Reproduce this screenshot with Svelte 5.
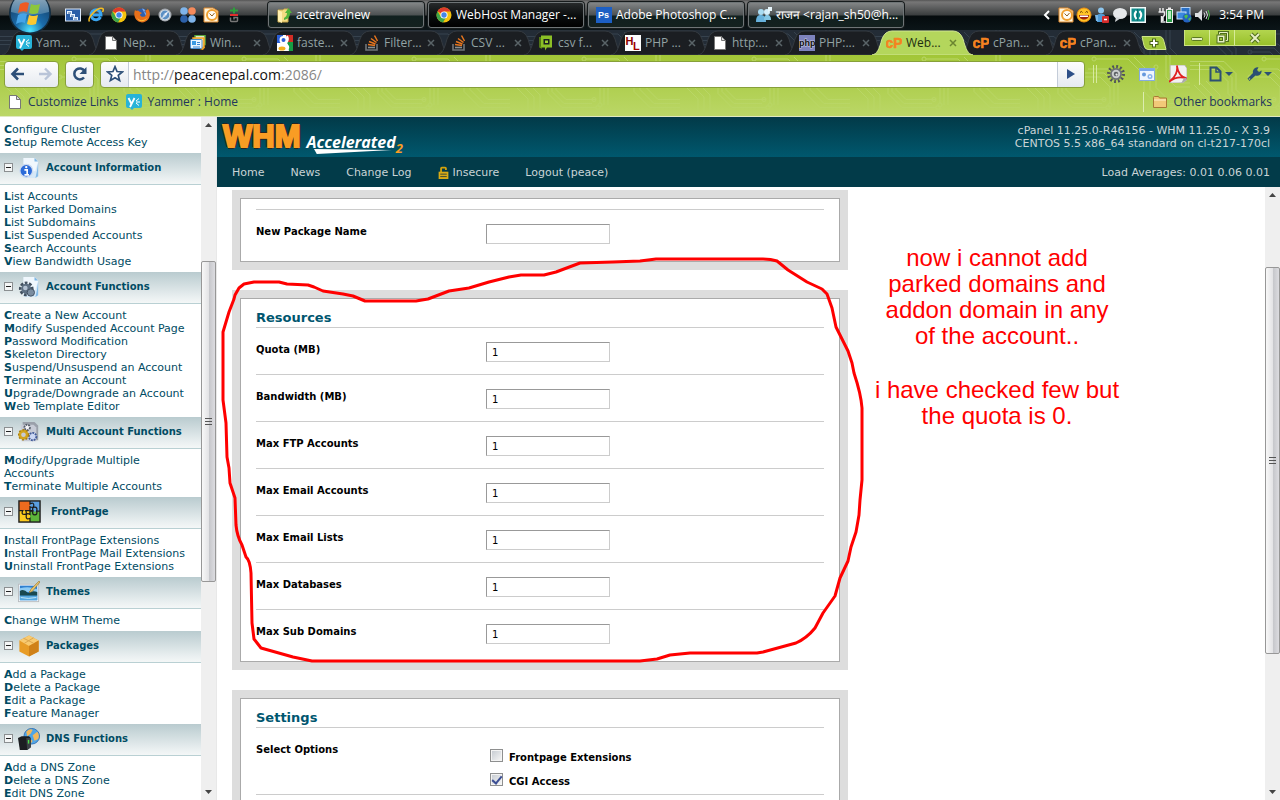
<script>
  const quick = ['desktop', 'ie', 'chrome', 'firefox', 'safari', 'dots', 'outlook', 'gplus'];
  const tasks = [
    { icon: 'folderup', text: 'acetravelnew' },
    { icon: 'chrome', text: 'WebHost Manager -...', active: true },
    { icon: 'ps', text: 'Adobe Photoshop C...' },
    { icon: 'people', text: 'राजन <rajan_sh50@h...' }
  ];
  const tray = ['outlook', 'smiley', 'person', 'bubble', 'camtasia'];
  const trayRight = ['plug', 'network', 'volume'];
  const tabs = [
    { icon: 'yammer', text: 'Yam...' },
    { icon: 'page', text: 'Nep...' },
    { icon: 'windows', text: 'Win...' },
    { icon: 'google', text: 'faste...' },
    { icon: 'stack', text: 'Filter...' },
    { icon: 'stack', text: 'CSV ...' },
    { icon: 'chat', text: 'csv f...' },
    { icon: 'hl', text: 'PHP ...' },
    { icon: 'page', text: 'http:...' },
    { icon: 'php', text: 'PHP:...' },
    { icon: 'cp', text: 'Web...', active: true },
    { icon: 'cp', text: 'cPan...' },
    { icon: 'cp', text: 'cPan...' }
  ];
  const topLinks = ['Configure Cluster', 'Setup Remote Access Key'];
  const groups = [
    { icon: 'accinfo', title: 'Account Information', links: ['List Accounts', 'List Parked Domains', 'List Subdomains', 'List Suspended Accounts', 'Search Accounts', 'View Bandwidth Usage'] },
    { icon: 'accfunc', title: 'Account Functions', links: ['Create a New Account', 'Modify Suspended Account Page', 'Password Modification', 'Skeleton Directory', 'Suspend/Unsuspend an Account', 'Terminate an Account', 'Upgrade/Downgrade an Account', 'Web Template Editor'] },
    { icon: 'multi', title: 'Multi Account Functions', links: ['Modify/Upgrade Multiple Accounts', 'Terminate Multiple Accounts'] },
    { icon: 'puzzle', title: 'FrontPage', wide: true, links: ['Install FrontPage Extensions', 'Install FrontPage Mail Extensions', 'Uninstall FrontPage Extensions'] },
    { icon: 'themes', title: 'Themes', links: ['Change WHM Theme'] },
    { icon: 'box', title: 'Packages', links: ['Add a Package', 'Delete a Package', 'Edit a Package', 'Feature Manager'] },
    { icon: 'dns', title: 'DNS Functions', links: ['Add a DNS Zone', 'Delete a DNS Zone', 'Edit DNS Zone'] }
  ];
  let resources = $state([
    { id: 'quota', label: 'Quota (MB)', value: '1' },
    { id: 'bandwidth', label: 'Bandwidth (MB)', value: '1' },
    { id: 'ftp', label: 'Max FTP Accounts', value: '1' },
    { id: 'email', label: 'Max Email Accounts', value: '1' },
    { id: 'lists', label: 'Max Email Lists', value: '1' },
    { id: 'databases', label: 'Max Databases', value: '1' },
    { id: 'subdomains', label: 'Max Sub Domains', value: '1' }
  ]);
  let packageName = $state('');
  let address = $state('http://peacenepal.com:2086/');
  let editingAddress = $state(false);
  let frontpage = $state(false);
  let cgi = $state(true);
</script>

{#snippet icon(name, size = 16)}
  <svg class="icon" width={size} height={size} viewBox={size > 20 ? '0 0 24 24' : '0 0 16 16'} aria-hidden="true">
    {#if name === 'desktop'}
      <rect x="0.500" y="2" width="15" height="12" fill="#2a5ea8" stroke="#dce8f8" />
      <path d="M2 4h5v3H2zM5 7h5v3H5zM8 10h5v3H8z" fill="#e8f2ff" /><path d="M3 5.500h3v1H3zM6 8.500h3v1H6zM9 11.500h3v1H9z" fill="#36609a" />
    {:else if name === 'ie'}
      <path d="M12.500 10A5 5 0 1 1 13 8H5" fill="none" stroke="#3aa5f0" stroke-width="3" />
      <path d="M1.500 14.500C-1 11 9 0 14.500 1.500 16 2 15 4 14.500 5" fill="none" stroke="#f5bd22" stroke-width="1.500" />
    {:else if name === 'chrome'}
      <circle cx="8" cy="8" r="7.500" fill="#f4c20d" /><path d="M8 8 1.500 4.200A7.500 7.500 0 0 1 14.600 4.500H8z" fill="#de3b2c" />
      <path d="M8 8 4.800 9.800 1.500 4.200A7.500 7.500 0 0 0 7 15.400L10.500 9.500z" fill="#3da54a" />
      <circle cx="8" cy="8" r="3.600" fill="#fff" /><circle cx="8" cy="8" r="2.700" fill="#4386e8" />
    {:else if name === 'firefox'}
      <circle cx="8" cy="8" r="6.500" fill="#2e5fb0" /><path d="M8 1.500C11 2 12 4 10 5c2 0 3 2 2 4" fill="#79a7e8" />
      <path d="M1 3c1 1 2 1 3 .5L6 5 8 6 6 7.500C6 10 11 11 12 8c.5-2 0-3-1-4.500 2 0 3-1 2.500-2C18 6 16 15 8 15.500 1 15-1 8 1 3z" fill="#e8701a" />
      <path d="M3 10c1 3 5 5 10 1-3 5-9 4-10-1z" fill="#ffc33c" />
    {:else if name === 'safari'}
      <circle cx="8" cy="8" r="6.500" fill="#a4a9af" /><circle cx="8" cy="8" r="5.200" fill="#dfe6ec" /><circle cx="8" cy="8" r="4.400" fill="#5b8fc4" />
      <path d="M11.500 4 7 7l2 2z" fill="#f0f4fa" /><path d="M4.500 12 7 7l2 2z" fill="#d0ddeb" />
    {:else if name === 'dots'}
      <circle cx="4" cy="4" r="3.800" fill="#7fb4ea" /><circle cx="12" cy="4" r="3.800" fill="#f58a5b" /><circle cx="4" cy="12" r="3.800" fill="#2c60a8" /><circle cx="12" cy="12" r="3.800" fill="#7fb4ea" />
    {:else if name === 'outlook'}
      <path d="M1 1h9l5 3v11H1z" fill="#fff3d8" stroke="#e08a2c" /><circle cx="9" cy="8" r="5" fill="#fffdf5" stroke="#f0a030" stroke-width="2" /><path d="M6.500 6.500 9 9l2.500-3" fill="none" stroke="#906020" />
    {:else if name === 'gplus'}
      <path d="M4 3.500h8M8 0.500v6" stroke="#2f9e3c" stroke-width="2" /><path d="M4 8h8" stroke="#e02d2d" stroke-width="2" />
      <path d="M4.500 10.500v3a1 1 0 0 0 1 1h5a1 1 0 0 0 1-1v-3H8v2" fill="none" stroke="#777" stroke-width="1.500" />
    {:else if name === 'folderup'}
      <path d="M2 3h5l1-1h4v13H2z" fill="#f3dc83" stroke="#c9a84a" /><path d="M2 3 6 5v11l-4-2z" fill="#fff0ae" />
      <path d="M8 11c2-1 3-3 3-5H9l3.500-5L16 6h-2c0 4-2 6-6 7z" fill="#52b43a" />
    {:else if name === 'ps'}
      <rect width="16" height="16" fill="#1c5fc4" /><text x="2" y="11" font-size="9" font-weight="700" font-family="Liberation Sans" fill="#fff">Ps</text>
    {:else if name === 'people'}
      <circle cx="5" cy="5" r="3" fill="#a9dcf2" /><path d="M0 15C0 9 2 8 5 8s5 2 5 7z" fill="#67b2dc" /><circle cx="11" cy="5" r="3" fill="#d4effb" /><path d="M8 13c0-4 1-5 3-5 3 0 4 2 4 5z" fill="#83c6e4" /><path d="M12 0h4v4h-3l-1 2z" fill="#e8f6fc" />
    {:else if name === 'smiley'}
      <circle cx="8" cy="8" r="7" fill="#ffc426" stroke="#f09010" /><path d="M3 8h10c0 6-10 6-10 0z" fill="#a0240e" /><path d="M4 8.500h8v1.500H4z" fill="#fff" /><path d="M4 5.500q1.500-2 2.500 0M9.500 5.500q1-2 2.500 0" fill="none" stroke="#5a3000" />
    {:else if name === 'person'}
      <circle cx="7" cy="3.500" r="3" fill="#8ec6ee" /><path d="M3 15V9c0-3 8-3 8 0v6z" fill="#4f9bd8" /><path d="M1 8h3v6H2z" fill="#77b6e8" /><rect x="8" y="9" width="7" height="7" rx="1" fill="#d32b2b" /><path d="M10 12.500h3" stroke="#fff" stroke-width="1.500" />
    {:else if name === 'bubble'}
      <ellipse cx="8" cy="6.500" rx="7" ry="5.500" fill="#e6e8ea" /><path d="M4 10 3 15l6-4z" fill="#d3d6d9" />
    {:else if name === 'camtasia'}
      <rect width="16" height="16" fill="#f4f8f8" /><rect x="1.500" y="1.500" width="13" height="13" fill="#108c8c" /><path d="M6.500 4Q3 8 6.500 12M9.500 4q3.500 4 0 8" fill="none" stroke="#fff" stroke-width="2" /><path d="M7.500 2v12" stroke="#0c6e70" />
    {:else if name === 'plug'}
      <path d="M2 1v4M5 1v4M0.500 5h6v3L5 10v4M3.500 9v6h4" fill="none" stroke="#e8e8e8" stroke-width="1.500" /><rect x="8.500" y="2.500" width="6" height="13" fill="#2a9c46" stroke="#eee" /><rect x="10" y="0.500" width="3" height="2" fill="#eee" /><rect x="10" y="4" width="3" height="8" fill="#b8eec0" />
    {:else if name === 'network'}
      <rect x="5" y="0.500" width="9" height="8" fill="#2870c8" stroke="#b8d4f4" /><rect x="1" y="5" width="9" height="7" fill="#3c8ae0" stroke="#cfe2f8" /><circle cx="11" cy="11" r="4.500" fill="#2462c0" /><path d="M8 9q3-3 4 0-1 2-2 3M12 12l3-2-1 4z" fill="#4cc04c" />
    {:else if name === 'volume'}
      <path d="M1 6h3l4-4v12l-4-4H1z" fill="#dcdfe1" /><path d="M10 5.500q2 2.500 0 5M12 4q3 4 0 8" fill="none" stroke="#dcdfe1" /><path d="M14 3q3 5 0 10" fill="none" stroke="#4fc24f" />
    {:else if name === 'yammer'}
      <path d="M2 0h12q2 0 2 2v10q0 2-2 2H8l-2 2-2-2H2q-2 0-2-2V2q0-2 2-2z" fill="#27b3d8" /><path d="M2.500 4 5.500 10 8.500 4M5.500 10 4 13" fill="none" stroke="#fff" stroke-width="1.800" /><path d="m10 7 3-2.500M10 8h4M10 9l3 2.500" stroke="#fff" />
    {:else if name === 'page'}
      <path d="M2.500 1.500h7l4 4v9h-11z" fill="#fff" stroke="#777" /><path d="M9.500 1.500v4h4z" fill="#ddd" stroke="#777" />
    {:else if name === 'windows'}
      <rect x="5" y="0.500" width="10" height="9" fill="#fff" stroke="#5aa83a" stroke-width="1.500" /><rect x="3" y="3" width="11" height="9.500" fill="#f8dc9a" stroke="#f0a020" stroke-width="1.500" /><path d="m2 12 11 3 2-3z" fill="#f0a020" /><rect x="0.500" y="4.500" width="11.500" height="9" rx="1" fill="#e9f5ff" stroke="#4b8fd0" /><rect x="2" y="6" width="4" height="4" fill="#3b9ae2" /><path d="M7 7.500h3M7 9.500h3M3 12h7" stroke="#3b86d2" fill="none" />
    {:else if name === 'google'}
      <rect width="16" height="16" fill="#fff" /><path d="M0 0h6v8H0z" fill="#2b5fd6" /><path d="M9 0h7v7h-6z" fill="#d22d25" /><path d="M10 7h6v9h-4z" fill="#179c43" /><ellipse cx="5" cy="13.500" rx="3.500" ry="2" fill="#f2b01e" /><circle cx="6.500" cy="5" r="3" fill="#2b5fd6" stroke="#fff" stroke-width="2" /><path d="M10 1q2 4-1 7-1 1 1 2 3 3-1 5" fill="none" stroke="#fff" stroke-width="2" />
    {:else if name === 'stack'}
      <path d="M2 9v6h11V9" fill="none" stroke="#70757a" stroke-width="1.600" /><path d="M4 12.500h7" stroke="#8b8f92" stroke-width="1.600" /><path d="m4 9.500 7 1M5 6.500l6.500 2.500M7 3.500l5.500 4M10.500 0.500l3 5.500" stroke="#e8761e" stroke-width="1.500" />
    {:else if name === 'chat'}
      <path d="M3 0.500h11v12H9l-2 3v-3H3z" fill="#8cbf26" /><rect x="5.500" y="4" width="6" height="5.500" fill="#1b1e22" /><rect x="7" y="5.500" width="3" height="2.500" fill="#9ed12f" /><path d="M2 2v10l2 1" fill="none" stroke="#659610" stroke-width="1.500" />
    {:else if name === 'hl'}
      <rect width="16" height="16" fill="#fff" /><text x="0.500" y="10" font-size="11" font-weight="700" font-family="Liberation Sans" fill="#8b0000">H</text><text x="8" y="15" font-size="11" font-weight="700" font-family="Liberation Sans" fill="#a40000">L</text>
    {:else if name === 'php'}
      <rect width="16" height="16" fill="#7e83bd" /><text x="0" y="11" font-size="9" font-weight="700" font-family="Liberation Sans" fill="#111" stroke="#c9cce6" stroke-width="1" paint-order="stroke">php</text>
    {:else if name === 'cp'}
      <text x="-0.500" y="13" font-size="14" font-weight="700" font-family="Liberation Sans" fill="#f58220" stroke="#f58220" stroke-width="0.500">cP</text>
    {:else if name === 'gear'}
      <circle cx="8" cy="8" r="6.500" fill="none" stroke="#505458" stroke-width="3" stroke-dasharray="1.600 1.800" /><circle cx="8" cy="8" r="4.500" fill="#c9cccd" stroke="#6c7074" stroke-width="1.500" /><circle cx="8" cy="8" r="2" fill="#5c6064" /><circle cx="8.500" cy="8.500" r="1" fill="#e8eaea" />
    {:else if name === 'panel'}
      <rect x="0.500" y="2.500" width="15" height="12" fill="#eef5fd" stroke="#86ace0" /><rect x="1" y="3" width="14" height="2" fill="#7ba7ea" /><circle cx="5" cy="8.500" r="2" fill="#6699dd" /><circle cx="11" cy="10.500" r="2.500" fill="#88b2ea" /><circle cx="11" cy="10.500" r="1" fill="#fff" />
    {:else if name === 'pdf'}
      <path d="M1 0h13l2 3v10q-4 4-8 3H1z" fill="#f1f1f1" stroke="#b0b0a8" stroke-width="0.800" /><path d="M0 15C6 11 8 5 7 0.500 8 8 11 11 16 12 10 10 5 11 0 15" fill="none" stroke="#e02020" stroke-width="1.600" /><path d="M11 16q4-1 5-5l-3 1z" fill="#aaa" />
    {:else if name === 'pagemenu'}
      <path d="M2.500 1.500h6l4 4v9h-10z" fill="none" stroke="#2c5073" stroke-width="2" /><path d="M8 2v4h4" fill="none" stroke="#2c5073" stroke-width="1.500" />
    {:else if name === 'wrench'}
      <path d="M14.500 4.500 12 6 10 4l1.500-2.500A4.500 4.500 0 0 0 6 7L0.500 12.500l2 2.500L8.500 9.500a4.500 4.500 0 0 0 6-5z" fill="#2c5073" /><circle cx="2.500" cy="13" r="0.800" fill="#b7d860" />
    {:else if name === 'folder'}
      <path d="M1.500 13.500v-10q0-1 1-1h4l1 1.500h7v9.500z" fill="#f2c878" stroke="#a87834" /><path d="M2 6h12" stroke="#fff0cc" />
    {:else if name === 'back'}
      <path d="M14 8H3M8 2.500 2.500 8 8 13.500" fill="none" stroke="#2d4f78" stroke-width="2.600" />
    {:else if name === 'forward'}
      <path d="M2 8h11M8 2.500 13.500 8 8 13.500" fill="none" stroke="#b9c4d8" stroke-width="2.400" />
    {:else if name === 'reload'}
      <path d="M12 11.500A5.500 5.500 0 1 1 12.500 5" fill="none" stroke="#2d4f78" stroke-width="2.500" /><path d="M14.500 1v7h-7z" fill="#2d4f78" />
    {:else if name === 'star'}
      <path d="m8 1.500 1.800 4.300 4.700.4-3.600 3 1.200 4.600L8 11.300l-4.100 2.500 1.200-4.600-3.600-3 4.700-.4z" fill="#fff" stroke="#2d4f78" stroke-width="1.500" />
    {:else if name === 'go'}
      <path d="M4 3v10l8-5z" fill="#2d4f88" />
    {:else if name === 'lock'}
      <path d="M5 8V3q0-1 1-1h4q1 0 1 1v2" fill="none" stroke="#d3a30c" stroke-width="2.200" /><path d="M2 7h12v9H2z" fill="#d9ab16" /><path d="M4 10h8M4 13h8" stroke="#3b4a34" stroke-width="1.200" />
    {:else if name === 'accinfo' || name === 'accfunc'}
      <path d="M6 1h12l4 4v16l-3 2H6z" fill="#d5e8f8" /><path d="M6 1h12l4 4-3 10L6 19z" fill="#f0f7fd" /><path d="M18 1v4h4z" fill="#7db6e6" /><path d="M22 6v15l-3 2q2-8 3-17" fill="#86bce8" />
      {#if name === 'accinfo'}
        <circle cx="9" cy="15" r="7" fill="#2c6bd8" stroke="#cfdcf0" stroke-width="1.500" /><circle cx="9" cy="11" r="1.300" fill="#fff" /><path d="M7 14h3v5M7 19.500h5" fill="none" stroke="#fff" stroke-width="1.800" />
      {:else}
        <circle cx="9" cy="14" r="6.500" fill="none" stroke="#42505f" stroke-width="3" stroke-dasharray="3 1.700" /><circle cx="9" cy="14" r="5.500" fill="#5e7083" /><circle cx="8" cy="13" r="2.500" fill="#b4c2d2" /><circle cx="14" cy="18" r="4" fill="#7b8da0" stroke="#3f4e5e" />
      {/if}
    {:else if name === 'multi'}
      <path d="M5 1h13l4 4v16H6z" fill="#9aa0aa" /><path d="M3 4h14l3 3v15H4z" fill="#c7cbd6" /><circle cx="10" cy="7" r="3" fill="#f4f4f8" stroke="#555c68" stroke-width="2" stroke-dasharray="2 1" /><circle cx="16" cy="17" r="4" fill="#ccd8f4" stroke="#405a98" stroke-width="2" stroke-dasharray="2 1" /><circle cx="6" cy="15" r="4" fill="none" stroke="#d2a41e" stroke-width="3" /><circle cx="6" cy="15" r="5.500" fill="none" stroke="#a87c10" stroke-width="1.500" stroke-dasharray="2 2" />
    {:else if name === 'puzzle'}
      <rect x="1" y="1" width="22" height="22" fill="#5db53a" /><path d="M1 1h11.500v10H1z" fill="#ee6a1e" /><path d="M12.500 1H23v11H12.500z" fill="#5a9ee0" /><path d="M1 11h11.500v12H1z" fill="#fccb1e" />
      <path d="M12.500 1v3q4-2 4 1.500t-4 1.500v4h3q-1-3.500 2-3.500t2 4H23" fill="none" stroke="#1c1c1c" stroke-width="1.300" />
      <path d="M1 11h4q-2 4 1.500 4T8 11h4.500v4q-4-2-4 2t4 2v4M12.500 11.500h3q-1 4 2 4t2-4" fill="none" stroke="#1c1c1c" stroke-width="1.300" />
      <rect x="1" y="1" width="22" height="22" fill="none" stroke="#222" stroke-width="1.500" />
    {:else if name === 'themes'}
      <rect x="0.500" y="3.500" width="22" height="19" fill="#fff" stroke="#b9bcc0" /><rect x="2" y="5" width="19" height="16" fill="#2f80d0" /><path d="M2 8q10-3 19 1v3H2z" fill="#8ccaf4" /><path d="M2 11q4-3 9 2 5-3 10-1v4H2z" fill="#184850" /><path d="M2 16h19v5H2z" fill="#55a8e0" /><path d="M3 18q8 2 17 0" stroke="#c9eafa" fill="none" /><path d="M14 9 23 0l1 1-8 10q-3 2-4 1 2-1 2-3z" fill="#e8c46a" stroke="#9a7630" stroke-width="0.700" />
    {:else if name === 'box'}
      <path d="M12 0.500 22.500 6v12L12 23.500 1.500 18V6z" fill="#e89c26" /><path d="M12 0.500 22.500 6 12 12 1.500 6z" fill="#f8ca70" /><path d="M12 12 22.500 6v12L12 23.500z" fill="#cf8118" /><path d="m6 3.500 11 5.500M17 3 7 9" stroke="#d9a24a" />
    {:else if name === 'dns'}
      <circle cx="15" cy="9" r="8.500" fill="#4fa5e6" stroke="#2f70b4" /><path d="M9 4q4-4 7-2l-2 4-4 3zM16 8l5-4q3 4 1 8l-4 2zM12 12l4 2-2 3z" fill="#f2b85c" /><path d="M0 11 4 9h8l2 2v10l-4 3H2z" fill="#1b1e21" /><path d="M9 11h5v10l-4 3z" fill="#3b4146" /><path d="M11.500 13v4" stroke="#49e044" stroke-width="1.500" />
    {/if}
  </svg>
{/snippet}

{#snippet link(text)}
  <a href="#top"><b>{text[0]}</b>{text.slice(1)}</a>
{/snippet}

{#snippet scrollbar(before, thumb, after)}
  <div class="scrollbar" aria-hidden="true">
    <svg width="15" height="16" viewBox="0 0 15 16"><path d="M4 10h7L7.500 6z" fill="#444" /></svg>
    <div style="flex: {before} 0 0"></div>
    <div class="thumb" style="flex: {thumb} 0 0"><i></i><i></i><i></i></div>
    <div style="flex: {after} 0 0"></div>
    <svg width="15" height="16" viewBox="0 0 15 16"><path d="M4 6h7l-3.500 4z" fill="#444" /></svg>
  </div>
{/snippet}

{#snippet circuit(id, color)}
  <svg class="circuit" aria-hidden="true">
    <defs>
      <pattern {id} width="170" height="62" patternUnits="userSpaceOnUse">
        <g fill="none" stroke={color} stroke-width="1">
          <path d="M0 6.500h34l12 12v16l10 10h30M0 10.500h30l12 12v14l12 12h28M0 14.500h26l12 12v12l14 14h34M4 30l14 14v18M10 28l14 14v20M16 26l14 14v22" />
          <path d="M170 52.500h-30l-16-16V20L108 4H76M170 48.500h-26l-14-14V18L114 2M170 44.500h-22l-12-12V14M60 22h20l10 10v16M64 18h20l10 10v22M68 14h20l10 10v26M150 0v18l10 10h10M146 0v22l10 10h14" />
          <circle cx="84" cy="44.500" r="2" /><circle cx="88" cy="52.500" r="2" /><circle cx="90" cy="50" r="2" /><circle cx="60" cy="22" r="2" /><circle cx="74" cy="4" r="2" /><circle cx="136" cy="12" r="2" />
        </g>
      </pattern>
    </defs>
    <rect width="100%" height="100%" fill="url(#{id})" />
  </svg>
{/snippet}

<div class="desktop" id="top">
  <header class="taskbar">
    <button class="orb" aria-label="Start">
      <svg width="44" height="36" viewBox="0 0 44 36" aria-hidden="true">
        <defs>
          <radialGradient id="orb" cx=".5" cy=".95" r=".9"><stop offset="0" stop-color="#4ee4ff" /><stop offset=".4" stop-color="#1b6cab" /><stop offset="1" stop-color="#16395c" /></radialGradient>
          <linearGradient id="shine" x2="0" y2="1"><stop offset="0" stop-color="#d8e6ee" /><stop offset="1" stop-color="#5b8cae" /></linearGradient>
        </defs>
        <circle cx="22" cy="13" r="21" fill="#122c40" /><circle cx="22" cy="13" r="19.500" fill="url(#orb)" />
        <path d="M3 12C3-3 15-7 22-7s19 4 19 19q-19 6-38 0" fill="url(#shine)" opacity=".7" />
        <path d="M12 4q5-3 9-1l-2 9q-5-2-9 1z" fill="#ee5a24" /><path d="M23 4q4 2 9 0l-2 9q-5 2-9 0z" fill="#8cc63c" />
        <path d="M10 15q4-3 9-1l-2 9q-4-2-9 1z" fill="#45a4e8" /><path d="M21 15q4 2 9 0l-2 9q-5 2-9 0z" fill="#fdc82f" />
      </svg>
    </button>
    <nav class="quick" aria-label="Quick launch">
      {#each quick as q}<button aria-label={q}>{@render icon(q)}</button>{/each}
    </nav>
    <div class="tasks">
      {#each tasks as t}
        <button class="task" class:active={t.active}>{@render icon(t.icon)}<span>{t.text}</span></button>
      {/each}
    </div>
    <div class="tray">
      <svg width="8" height="10" viewBox="0 0 8 10" aria-hidden="true"><path d="M6 1 2 5l4 4" fill="none" stroke="#fff" stroke-width="2" /></svg>
      {#each tray as t}{@render icon(t)}{/each}
      <span class="trayright">{#each trayRight as t}{@render icon(t)}{/each}</span>
      <time>3:54 PM</time>
    </div>
  </header>

  <div class="tabstrip">
    {@render circuit('circuit-dark', '#36424e')}
    <div class="tabs">
      {#each tabs as t}
        <div class="tab" class:active={t.active}>
          <svg class="shape" viewBox="0 0 101 25" preserveAspectRatio="none" aria-hidden="true">
            <path d="M0 25C5 24 7 20 10 9Q13 1 20 1H81Q88 1 91 9C94 20 96 24 101 25z" />
          </svg>
          {@render icon(t.icon)}
          <span>{t.text}</span>
          <button class="close" aria-label="Close tab"><svg width="8" height="8" viewBox="0 0 8 8"><path d="m1 1 6 6M7 1 1 7" /></svg></button>
        </div>
      {/each}
      <button class="newtab" aria-label="New tab">
        <svg width="26" height="14" viewBox="0 0 26 14"><path d="M1 0.500h17q4 0 5 5l2 8H7q-3 0-4-4z" fill="#a2c83e" stroke="#cfe68a" /><path d="M13 2.500v9M8.500 7h9" stroke="#4b6618" stroke-width="4" /><path d="M13 3.500v7M9.500 7h7" stroke="#fff" stroke-width="2" /></svg>
      </button>
    </div>
    <div class="wincontrols">
      <button aria-label="Minimize"><svg width="14" height="12" viewBox="0 0 14 12"><rect x="1.500" y="5.500" width="11" height="3" rx="1" fill="#e6efc4" stroke="#5b7a20" /></svg></button>
      <button aria-label="Restore"><svg width="14" height="14" viewBox="0 0 14 14"><path d="M4.500 3.500v-2h8v8h-2" fill="none" stroke="#50701c" stroke-width="3" /><path d="M4.500 3.500v-2h8v8h-2" fill="none" stroke="#e6efc4" /><rect x="2" y="4" width="8" height="8" fill="#e6efc4" stroke="#50701c" /><rect x="4.500" y="6.500" width="3" height="3" fill="#a2c83e" stroke="#50701c" /></svg></button>
      <button class="wide" aria-label="Close"><svg width="14" height="12" viewBox="0 0 14 12"><path d="m3 2 8 8m0-8-8 8" stroke="#50701c" stroke-width="4" /><path d="m3 2 8 8m0-8-8 8" stroke="#e6efc4" stroke-width="2" /></svg></button>
    </div>
  </div>

  <div class="toolbar">
    {@render circuit('circuit-green', '#b9d666')}
    <div class="addressrow">
      <div class="pair">
        <button aria-label="Back">{@render icon('back')}</button>
        <button aria-label="Forward">{@render icon('forward')}</button>
      </div>
      <button class="pill" aria-label="Reload">{@render icon('reload')}</button>
      <div class="omnibox">
        <button aria-label="Bookmark">{@render icon('star', 18)}</button>
        <div class="url">
          {#if !editingAddress}<span aria-hidden="true"><i>http://</i>peacenepal.com<i>:2086/</i></span>{/if}
          <input class:editing={editingAddress} aria-label="Address" bind:value={address} onfocus={() => (editingAddress = true)} onblur={() => (editingAddress = false)} />
        </div>
        <button class="go" aria-label="Go">{@render icon('go')}</button>
      </div>
      <div class="extensions">
        <i class="grip"></i>
        <button aria-label="Settings">{@render icon('gear', 18)}</button>
        <button aria-label="Panel">{@render icon('panel')}</button>
        <button aria-label="PDF">{@render icon('pdf', 18)}</button>
        <i class="rule"></i>
        <button class="menu" aria-label="Page menu">{@render icon('pagemenu')}<i class="caret"></i></button>
        <button class="menu" aria-label="Tools menu">{@render icon('wrench')}<i class="caret"></i></button>
      </div>
    </div>
    <nav class="bookmarks" aria-label="Bookmarks">
      <a href="#top">{@render icon('page')}Customize Links</a>
      <a href="#top">{@render icon('yammer')}Yammer : Home</a>
      <a class="other" href="#top">{@render icon('folder')}Other bookmarks</a>
    </nav>
  </div>

  <div class="frames">
    <aside class="side">
      <nav class="menu-list" aria-label="WHM functions">
        <ul class="first">
          {#each topLinks as l}<li>{@render link(l)}</li>{/each}
        </ul>
        {#each groups as g}
          <h2 class:wide={g.wide}>
            <button class="toggle" aria-label="Collapse {g.title}"></button>
            {@render icon(g.icon, g.wide ? 23 : 22)}
            <span>{g.title}</span>
          </h2>
          <ul>
            {#each g.links as l}<li>{@render link(l)}</li>{/each}
          </ul>
        {/each}
      </nav>
      {@render scrollbar(128, 320, 203)}
    </aside>

    <main class="content">
      <div class="banner">
        <div class="logo"><span class="whm">WHM</span><span class="acc">Accelerated<svg viewBox="0 0 84 5" preserveAspectRatio="none" aria-hidden="true"><path d="M0 0 84 1 3 5z" fill="#fff" /></svg></span><sub>2</sub></div>
        <p>cPanel 11.25.0-R46156 - WHM 11.25.0 - X 3.9<br />CENTOS 5.5 x86_64 standard on cl-t217-170cl</p>
      </div>
      <nav class="mainnav" aria-label="Main">
        <a href="#top">Home</a>
        <a href="#top">News</a>
        <a href="#top">Change Log</a>
        <a href="#top" class="insecure">{@render icon('lock', 13)}Insecure</a>
        <a href="#top">Logout (peace)</a>
        <span>Load Averages: 0.01 0.06 0.01</span>
      </nav>
      <div class="pane">
        <form class="form" onsubmit={(e) => e.preventDefault()}>
          <section class="card">
            <div class="inner">
              <div class="rows top">
                <div class="row"><label for="package">New Package Name</label><input id="package" type="text" bind:value={packageName} /></div>
              </div>
            </div>
          </section>
          <section class="card">
            <div class="inner">
              <h3>Resources</h3>
              <div class="rows">
                {#each resources as r}
                  <div class="row"><label for={r.id}>{r.label}</label><input id={r.id} type="text" bind:value={r.value} /></div>
                {/each}
              </div>
            </div>
          </section>
          <section class="card">
            <div class="inner">
              <h3>Settings</h3>
              <div class="rows">
                <div class="row options">
                  <span class="label">Select Options</span>
                  <div class="checks">
                    <label><input type="checkbox" bind:checked={frontpage} /><span>Frontpage Extensions</span></label>
                    <label><input type="checkbox" bind:checked={cgi} /><span>CGI Access</span></label>
                  </div>
                </div>
                <div class="row"></div>
              </div>
            </div>
          </section>
        </form>
        {@render scrollbar(64, 386, 130)}
        <svg class="scribble" width="660" height="490" viewBox="217 187 660 490" aria-hidden="true">
          <path d="M234 299 235 295 239 288 244 284 254 282H279L287 284 308 285 314 287 323 291 343 294 353 296 365 301H416L428 299 449 291 469 288 489 282 509 277 521 275H544L556 272 580 263 613 262 640 261 656 259H763Q771 259 777 261L788 270 807 282 822 289 827 294 832 308 836 327 848 351 852 363 854 373Q861 394 862 408V480L860 500 859 515 856 532 851 547 848 561 840 578 835 596 823 613 815 628Q807 638 796 643L763 652 757 653H690L670 655 657 659 640 661H312L293 657 261 648 254 639 252 623 251 573Q250 560 246 557L242 545Q237 536 236 525L235 498 230 483 229 468 227 457 226 423 223 400V332L229 312Z" />
        </svg>
        <div class="note">
          <p>now i cannot add<br />parked domains and<br />addon domain in any<br />of the account..</p>
          <p>i have checked few but<br />the quota is 0.</p>
        </div>
      </div>
    </main>
  </div>
</div>

<style>
  :global(body) { margin: 0; }
  * { box-sizing: border-box; }
  .desktop { display: flex; flex-direction: column; height: 100vh; overflow: hidden; font: 11px/13px "DejaVu Sans", Verdana, sans-serif; background: #fff; }
  button { border: 0; padding: 0; margin: 0; background: none; font: inherit; color: inherit; display: flex; align-items: center; justify-content: center; }
  a { color: inherit; text-decoration: none; }
  ul, p, h2, h3 { margin: 0; padding: 0; list-style: none; }
  .icon { flex: none; display: block; }

  .taskbar { display: flex; align-items: center; height: 30px; flex: none; padding-left: 8px; background: linear-gradient(#555 0, #777 2px, #3a3d3e 15px, #050b0d 16px, #0b1518); color: #fff; font: 12px/16px "Open Sans", sans-serif; position: relative; z-index: 3; }
  .orb { align-self: flex-start; width: 44px; height: 30px; align-items: flex-start; }
  .orb svg { flex: none; overflow: hidden; }
  .quick { display: flex; gap: 7px; margin-left: 13px; width: 203px; }
  .tasks { display: flex; gap: 4px; flex: 0 1 636px; min-width: 0; }
  .task { flex: 1 1 0; min-width: 0; height: 26px; justify-content: flex-start; gap: 4px; padding-left: 7px; border: 1px solid #6f7577; border-radius: 3px; background: linear-gradient(#828586, #4c5152 12px, #11201f 13px, #14211f); white-space: nowrap; overflow: hidden; box-shadow: 0 0 0 1px #161b1c; }
  .task.active { background: linear-gradient(#272a2b, #0b0e0f 12px, #000); }
  .tray { margin-left: auto; display: flex; align-items: center; gap: 2px; padding-right: 16px; white-space: nowrap; }
  .tray > svg:first-child { margin-right: 5px; }
  .trayright { display: flex; gap: 2px; margin: 0 7px 0 10px; }

  .tabstrip { display: flex; height: 25px; flex: none; background: #232c36; position: relative; z-index: 2; }
  .circuit { position: absolute; inset: 0; width: 100%; height: 100%; }
  .tabs { display: flex; flex: 1 1 auto; min-width: 0; padding-left: 2px; position: relative; }
  .tab { flex: 0 1 87px; min-width: 0; display: flex; align-items: center; gap: 4px; padding: 0 2px 0 14px; position: relative; color: #92a3a4; font: 12px/16px "Open Sans", sans-serif; white-space: nowrap; }
  .tab .shape { position: absolute; left: 0; top: 0; width: calc(100% + 14px); height: 25px; fill: #1b1e22; stroke: #343a40; stroke-width: 1; }
  .tab.active { color: #1f2e10; z-index: 1; }
  .tab.active .shape { fill: #b4d65c; stroke: #d0e690; }
  .tab .icon, .tab span, .tab .close { position: relative; }
  .tab span { flex: 1 1 auto; min-width: 0; }
  .close svg { stroke: #5a6468; stroke-width: 1.500px; }
  .active .close svg { stroke: #6a8430; }
  .newtab { margin: 0 0 0 8px; align-self: center; }
  .wincontrols { display: flex; height: 16px; margin-right: 4px; position: relative; border: 1px solid #cbe380; border-top: 0; background: linear-gradient(#b3d54f, #98c02a); }
  .wincontrols button { width: 25px; border-right: 1px solid #d7eb98; }
  .wincontrols .wide { width: 40px; border: 0; }

  .toolbar { flex: none; height: 62px; position: relative; background: linear-gradient(#a2c637, #bbd767); border-bottom: 1px solid #dfe9c0; }
  .addressrow { position: relative; display: flex; align-items: center; padding: 5px 8px 0 4px; height: 33px; }
  .pair, .pill, .omnibox { height: 27px; border: 1px solid #87a03a; border-radius: 4px; background: linear-gradient(#fdfdfd, #e6eaf0); }
  .pair { display: flex; width: 55px; margin-right: 6px; }
  .pair button { flex: 1; }
  .pill { width: 29px; margin-right: 6px; }
  .omnibox { display: flex; flex: 1; min-width: 0; }
  .omnibox button { width: 27px; }
  .omnibox .go { width: 27px; border-left: 1px solid #c4ccd8; }
  .url { flex: 1; min-width: 0; position: relative; background: #fff; border-left: 1px solid #c4ccd8; font: 14px/25px "Open Sans", sans-serif; color: #111; }
  .url span { position: absolute; left: 4px; top: 0; pointer-events: none; }
  .url i { font-style: normal; color: #868686; }
  .url input { width: 100%; height: 100%; border: 0; padding: 0 4px; outline: 0; font: inherit; color: transparent; background: transparent; }
  .url input.editing { color: #111; }
  .extensions { display: flex; align-items: center; gap: 14px; margin-left: 8px; }
  .grip { width: 4px; height: 18px; border: solid #d8eaa0; border-width: 0 1px; margin-right: -4px; }
  .rule { width: 1px; height: 22px; background: #d8eaa0; margin: 0 -6px 0 -2px; }
  .menu { gap: 1px; }
  .caret { border: 4px solid transparent; border-top-color: #2c5073; border-bottom: 0; }
  .bookmarks { position: relative; display: flex; align-items: center; gap: 8px; padding: 0 8px 0 7px; height: 28px; font: 12px/20px "Open Sans", sans-serif; color: #22375c; }
  .bookmarks a { display: flex; align-items: center; gap: 5px; }
  .bookmarks .other { margin-left: auto; padding-left: 8px; border-left: 1px solid #dcecb0; }

  .frames { flex: 1; min-height: 0; display: flex; }
  .side { flex: none; width: 217px; display: flex; border-right: 1px solid #e8e8e8; }
  .menu-list { flex: 1; min-width: 0; overflow: hidden; color: #004b63; }
  .menu-list ul { padding: 5px 10px 4px 4px; }
  .menu-list .first { padding-top: 6px; }
  .menu-list h2 { display: flex; align-items: center; height: 32px; padding: 0 4px 2px; background: linear-gradient(#b9cbcf, #e9eff0 80%, #f4f7f7); border-bottom: 1px solid #b9d0d3; font-size: 10px; line-height: 13px; }
  .menu-list h2 .icon { margin: 0 6px 0 5px; }
  .menu-list h2.wide .icon { margin-right: 10px; }
  .toggle { width: 9px; height: 9px; border: 1px solid #8b8f91; background: linear-gradient(#222, #222) center / 5px 1px no-repeat #f4f6f6; }
  .scrollbar { flex: none; width: 15px; display: flex; flex-direction: column; background: #efefef; }
  .scrollbar svg { flex: none; }
  .thumb { border: 1px solid #979797; border-radius: 2px; background: linear-gradient(90deg, #f8f8f8, #e4e4e6 50%, #c6c7cb 55%, #dcdce0); display: flex; flex-direction: column; align-items: center; justify-content: center; gap: 2px; }
  .thumb i { width: 7px; height: 1px; background: #555; }

  .content { flex: 1; min-width: 0; display: flex; flex-direction: column; }
  .banner { flex: none; height: 40px; display: flex; align-items: center; justify-content: space-between; padding: 0 10px 0 6px; background: linear-gradient(#023a48, #00586e); color: #c9d4d6; text-align: right; }
  .logo { display: flex; align-items: center; color: #fff; text-align: left; }
  .whm { font: bold 31px/36px "Liberation Sans", sans-serif; color: #f99d24; -webkit-text-stroke: 2px #f99d24; text-shadow: -2px 0 #2a2420, 2px 0 #2a2420, 0 -2px #2a2420, 0 2px #2a2420, 1px 1px #2a2420, -1px -1px #2a2420; margin-right: 6px; }
  .acc { font: italic bold 16px/18px "Open Sans", sans-serif; padding-top: 12px; }
  .acc svg { display: block; width: 78px; height: 5px; margin-left: 8px; margin-top: -2px; }
  .logo sub { font: italic bold 13px/14px "Open Sans", sans-serif; color: #f99d24; align-self: flex-end; }
  .mainnav { flex: none; height: 30px; display: flex; align-items: center; gap: 26px; padding: 0 10px 0 15px; background: #023b49; color: #c9d4d6; }
  .mainnav span { margin-left: auto; }
  .insecure { display: flex; align-items: center; gap: 2px; }
  .pane { flex: 1; min-height: 0; display: flex; justify-content: space-between; position: relative; overflow: hidden; }
  .form { flex: 0 1 616px; min-width: 0; margin: 3px 0 0 15px; }
  .card { background: #ddd; padding: 8px; margin-bottom: 20px; }
  .inner { border: 1px solid #aaa; background: #fff; padding: 0 15px 5px; }
  h3 { font-size: 13px; line-height: 18px; color: #00566f; padding-top: 10px; }
  .rows { border-top: 1px solid #ccc; }
  .inner .top { margin-top: 10px; }
  .row { display: flex; min-height: 46px; padding-top: 14px; font-weight: bold; font-size: 10px; line-height: 15px; color: #000; }
  .row + .row { border-top: 1px solid #ccc; min-height: 47px; }
  .row label, .row .label { flex: none; }
  .row > label, .row > .label { width: 230px; }
  .row input[type="text"] { width: 124px; height: 20px; margin: 0; border: 1px solid #ccc; border-top-color: #999; border-left-color: #999; padding: 1px 5px 0; font: 10px/14px "DejaVu Sans", sans-serif; outline: 0; background: #fff; }
  .options { padding: 14px 0 5px; }
  .checks { display: flex; flex-direction: column; gap: 8px; padding: 7px 0 0 4px; }
  .checks label { display: flex; align-items: flex-end; gap: 6px; height: 16px; }
  .checks input { appearance: none; width: 13px; height: 13px; margin: 0 0 3px; border: 1px solid #8e8f8f; background: linear-gradient(135deg, #c8cdd3, #f4f4f4) content-box, #f4f4f4; padding: 1px; display: grid; place-items: center; }
  .checks input:checked::after { content: ""; width: 4px; height: 8px; border: solid #3c4f94; border-width: 0 2px 2px 0; transform: rotate(40deg); margin-top: -2px; }

  .scribble { position: absolute; left: 0; top: 0; pointer-events: none; }
  .scribble path { fill: none; stroke: #f00; stroke-width: 3; stroke-linejoin: round; }
  .note { position: absolute; left: 640px; top: 58px; width: 280px; text-align: center; color: #f00; font: 24px/26px "Liberation Sans", Arial, sans-serif; pointer-events: none; }
  .note p + p { margin-top: 28px; }
</style>
